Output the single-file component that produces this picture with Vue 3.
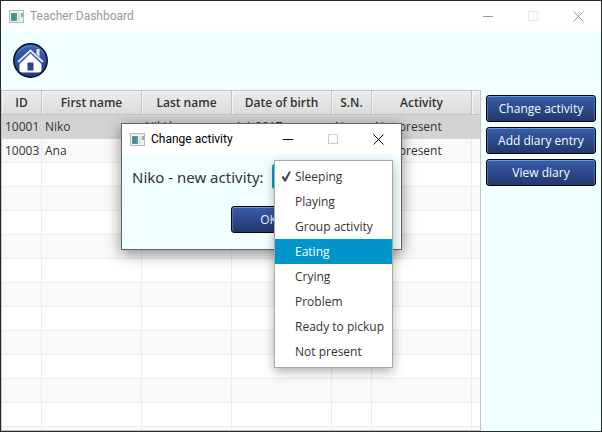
<script setup>
import { ref } from 'vue'

const columns = [
  { key: 'id', label: 'ID', cls: 'c-id' },
  { key: 'first', label: 'First name', cls: 'c-first' },
  { key: 'last', label: 'Last name', cls: 'c-last' },
  { key: 'dob', label: 'Date of birth', cls: 'c-dob' },
  { key: 'sn', label: 'S.N.', cls: 'c-sn' },
  { key: 'activity', label: 'Activity', cls: 'c-activity' },
]
const children = [
  { id: '10001', first: 'Niko', last: 'Nikić', dob: '1.1.2017.', sn: 'No', activity: 'Not present' },
  { id: '10003', first: 'Ana', last: '', dob: '', sn: '', activity: 'Not present' },
]
const emptyRows = 12
const selectedId = ref('10001')
const options = ['Sleeping', 'Playing', 'Group activity', 'Eating', 'Crying', 'Problem', 'Ready to pickup', 'Not present']
const current = ref('Sleeping')
const hovered = ref('Eating')
</script>

<template>
  <div class="desktop">
    <div class="window">
      <header class="titlebar inactive">
        <svg class="app-icon" viewBox="0 0 15 13" aria-hidden="true">
          <rect x="0.5" y="0.5" width="14" height="12" fill="#eef1f3" stroke="#b4bbc0" />
          <rect x="2" y="3" width="6" height="8" fill="#5b93a8" />
          <rect x="3" y="4" width="3" height="6" fill="#3f9274" />
          <rect x="9" y="3" width="2" height="8" fill="#d8dfe3" />
          <rect x="12" y="3" width="2" height="4" fill="#7fb3ac" />
        </svg>
        <h1 class="title">Teacher Dashboard</h1>
        <div class="controls">
          <button type="button" aria-label="Minimize"><svg viewBox="0 0 11 11"><path d="M0 5.5H10" /></svg></button>
          <button type="button" aria-label="Maximize" disabled><svg viewBox="0 0 11 11"><rect x="0.5" y="0.5" width="9" height="9" /></svg></button>
          <button type="button" aria-label="Close"><svg viewBox="0 0 11 11"><path d="M0.5 0.5L10.5 10.5M10.5 0.5L0.5 10.5" /></svg></button>
        </div>
      </header>

      <div class="toolbar">
        <button type="button" class="home" aria-label="Home">
          <svg viewBox="0 0 35 35">
            <defs>
              <linearGradient id="homeFill" x1="0" y1="0" x2="0" y2="1">
                <stop offset="0" stop-color="#3a62b4" />
                <stop offset="1" stop-color="#223a7c" />
              </linearGradient>
            </defs>
            <circle cx="17.5" cy="17.5" r="16.700" fill="url(#homeFill)" stroke="#06101f" stroke-width="1.5" />
            <path d="M4.500 10.500A15 15 0 0 1 30.500 10.500" fill="none" stroke="#4f8cc2" stroke-width="1" />
            <path d="M23.500 6H26.500V14L23.500 11Z" fill="#e8edf7" />
            <path d="M5 19L17.500 7.500L30 19" fill="none" stroke="#dfe6f4" stroke-width="2" />
            <path d="M17.500 10.500L28.500 21V26.500Q28.500 29.500 25.500 29.500H9.500Q6.500 29.500 6.500 26.500V21Z" fill="#fff" />
            <path d="M14.500 27.500V20.500Q14.500 19.500 15.500 19.500H19.500Q20.500 19.500 20.500 20.500V27.500Z" fill="#2b468c" />
          </svg>
        </button>
      </div>

      <main class="content">
        <div class="table-box">
          <table>
            <thead>
              <tr>
                <th v-for="c in columns" :key="c.key" :class="c.cls" scope="col">{{ c.label }}</th>
                <th class="filler"></th>
              </tr>
            </thead>
            <tbody>
              <tr v-for="child in children" :key="child.id" :class="{ selected: child.id === selectedId }" @click="selectedId = child.id">
                <td v-for="c in columns" :key="c.key">{{ child[c.key] }}</td>
                <td></td>
              </tr>
              <tr v-for="n in emptyRows" :key="n">
                <td v-for="c in columns" :key="c.key"></td>
                <td></td>
              </tr>
            </tbody>
          </table>
        </div>
        <nav class="actions">
          <button type="button" class="btn">Change activity</button>
          <button type="button" class="btn">Add diary entry</button>
          <button type="button" class="btn">View diary</button>
        </nav>
      </main>
    </div>

    <section class="dialog" role="dialog" aria-labelledby="dialog-title">
      <header class="titlebar">
        <svg class="app-icon" viewBox="0 0 15 13" aria-hidden="true">
          <rect x="0.5" y="0.5" width="14" height="12" fill="#eef1f3" stroke="#b4bbc0" />
          <rect x="2" y="3" width="6" height="8" fill="#5b93a8" />
          <rect x="3" y="4" width="3" height="6" fill="#3f9274" />
          <rect x="9" y="3" width="2" height="8" fill="#d8dfe3" />
          <rect x="12" y="3" width="2" height="4" fill="#7fb3ac" />
        </svg>
        <h2 id="dialog-title" class="title">Change activity</h2>
        <div class="controls">
          <button type="button" aria-label="Minimize"><svg viewBox="0 0 11 11"><path d="M0 5.5H10" /></svg></button>
          <button type="button" aria-label="Maximize" disabled><svg viewBox="0 0 11 11"><rect x="0.5" y="0.5" width="9" height="9" /></svg></button>
          <button type="button" aria-label="Close"><svg viewBox="0 0 11 11"><path d="M0.5 0.5L10.5 10.5M10.5 0.5L0.5 10.5" /></svg></button>
        </div>
      </header>
      <div class="dialog-body">
        <div class="field">
          <label for="activity">Niko - new activity:</label>
          <div class="combo">
            <select id="activity" v-model="current">
              <option v-for="o in options" :key="o">{{ o }}</option>
            </select>
            <ul class="menu" role="listbox" aria-label="Activities">
              <li
                v-for="o in options"
                :key="o"
                role="option"
                :aria-selected="o === current"
                :class="{ hovered: o === hovered }"
                @mouseenter="hovered = o"
                @click="current = o"
              >
                <span class="tick"><svg v-if="o === current" viewBox="0 0 10 11"><path d="M0.500 6L2.500 5L4 7.500L8 0.500H10L5 10.500H3.500Z" /></svg></span>
                {{ o }}
              </li>
            </ul>
          </div>
        </div>
        <button type="button" class="btn ok">OK</button>
      </div>
    </section>
  </div>
</template>

<style>
body {
  margin: 0;
}
</style>

<style scoped>
* {
  box-sizing: border-box;
}
.desktop {
  position: relative;
  display: flex;
  min-height: 100vh;
  padding: 1px;
  background: #2a2a2a;
  font-family: "Open Sans", "Noto Sans", sans-serif;
  font-size: 12px;
  color: #333;
}
button,
select {
  font: inherit;
}
.window {
  flex: 1;
  display: flex;
  flex-direction: column;
  min-width: 0;
  background: #f0ffff;
}
.titlebar {
  display: flex;
  align-items: center;
  height: 30px;
  padding-left: 8px;
  background: #fff;
  color: #000;
}
.app-icon {
  width: 15px;
  height: 13px;
  margin-right: 6px;
}
.title {
  flex: 1;
  margin: 0;
  font-family: Roboto, "Open Sans", sans-serif;
  font-size: 12px;
  font-weight: 400;
  line-height: 16px;
  white-space: nowrap;
}
.inactive {
  color: #999;
}
.controls {
  display: flex;
}
.controls button {
  display: flex;
  align-items: center;
  justify-content: center;
  width: 45px;
  height: 30px;
  padding: 0;
  border: 0;
  background: none;
  color: inherit;
}
.controls svg {
  width: 11px;
  height: 11px;
  fill: none;
  stroke: currentColor;
  stroke-width: 1;
}
.controls button:disabled {
  color: #ccc;
}
.inactive .controls button:disabled {
  color: #e6e6e6;
}
.toolbar {
  padding: 12px;
}
.home {
  display: block;
  width: 35px;
  height: 35px;
  padding: 0;
  border: 0;
  background: none;
}
.home svg {
  display: block;
  width: 35px;
  height: 35px;
}
.content {
  flex: 1;
  display: flex;
  min-height: 0;
}
.table-box {
  flex: 1;
  height: calc(100vh - 91px);
  overflow: hidden;
  border: 1px solid #c4c4c4;
  background: #fff;
}
table {
  width: 100%;
  table-layout: fixed;
  border-collapse: separate;
  border-spacing: 0;
}
.c-id,
.c-sn {
  width: 40px;
}
.c-first,
.c-dob,
.c-activity {
  width: 100px;
}
.c-last {
  width: 90px;
}
th {
  height: 24px;
  padding: 0;
  border-right: 1px solid #c4c4c4;
  border-bottom: 1px solid #c4c4c4;
  background: linear-gradient(#ececec, #dcdcdc);
  box-shadow: inset 1px 1px #f4f4f4;
  font-weight: 600;
  line-height: 16px;
  text-align: center;
}
td {
  height: 24px;
  padding: 0 3px;
  border-right: 1px solid #ececec;
  border-bottom: 1px solid #ececec;
  line-height: 16px;
  white-space: nowrap;
}
th:last-child,
td:last-child {
  border-right: 0;
}
tbody tr:nth-child(even) {
  background: #f9f9f9;
}
tbody .selected td {
  border-color: #d3d3d3;
  background: #d3d3d3;
}
.actions {
  display: flex;
  flex-direction: column;
  gap: 5px;
  width: 120px;
  padding: 5px;
}
.btn {
  height: 27px;
  padding: 0;
  border: 1px solid #000;
  border-radius: 3px;
  background: linear-gradient(#3a5cab, #22386f);
  box-shadow: inset 0 1px #5c9fd0, inset 1px 0 #3f6fb4, inset -1px 0 #3f6fb4;
  color: #f0ffff;
  line-height: 16px;
}
.dialog {
  position: absolute;
  top: 123px;
  left: 121px;
  width: 281px;
  border: 1px solid #666;
  background: #f0ffff;
  box-shadow: 0 4px 14px rgba(0, 0, 0, 0.45);
}
.dialog-body {
  display: flex;
  flex-direction: column;
  gap: 17px;
  padding: 10px 10px 16px;
}
.field {
  display: flex;
  align-items: center;
  gap: 5px;
}
.field label {
  width: 135px;
  font-family: "Noto Sans", sans-serif;
  font-size: 15px;
  line-height: 20px;
  white-space: nowrap;
}
.combo {
  position: relative;
  flex: 1;
}
.combo select {
  display: block;
  width: 100%;
  height: 25px;
  border: 2px solid #039ed3;
  border-radius: 3px;
  background: #eee;
  color: #333;
}
.menu {
  position: absolute;
  top: -4px;
  left: 2px;
  width: 119px;
  margin: 0;
  padding: 3px 0;
  border: 1px solid #a9a9a9;
  background: #fff;
  box-shadow: 0 4px 10px rgba(0, 0, 0, 0.3);
  list-style: none;
}
.menu li {
  display: flex;
  align-items: center;
  height: 25px;
  padding-left: 6px;
  line-height: 16px;
  white-space: nowrap;
}
.menu .hovered {
  background: #0096c9;
  color: #fff;
}
.tick {
  display: flex;
  width: 14px;
}
.tick svg {
  width: 10px;
  height: 11px;
  fill: #444;
}
.ok {
  width: 75px;
  margin-left: 99px;
}
</style>
